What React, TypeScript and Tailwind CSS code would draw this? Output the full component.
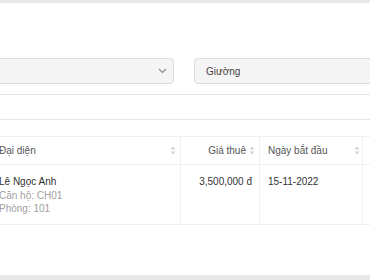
function SortIcon() {
  return (
    <svg width="6" height="9" viewBox="0 0 6 9" className="shrink-0">
      <path d="M3 0.5 L5.5 3.5 H0.5 Z" fill="#d2d2d2" />
      <path d="M3 8.5 L5.5 5.5 H0.5 Z" fill="#d2d2d2" />
    </svg>
  );
}

function Chevron() {
  return (
    <svg width="9" height="6" viewBox="0 0 9 6" fill="none">
      <path d="M1 1 L4.5 4.5 L8 1" stroke="#8c8c8c" strokeWidth="1.2" />
    </svg>
  );
}

export default function App() {
  return (
    <div
      className="w-[370px] h-[280px] bg-[#e8e8e8] pt-[3px] overflow-hidden"
      style={{ fontFamily: '"Liberation Sans", Arial, sans-serif' }}
    >
      <div className="h-[272px] bg-white overflow-hidden">
        {/* filters */}
        <div className="pt-[55px] pb-[10px] border-b border-[#e6e6e6]">
          <div className="flex gap-[20px] -ml-[26px]">
            <div className="w-[200px] h-[26px] shrink-0 rounded-[4px] border border-[#dcdcdc] bg-[#f5f5f5] flex items-center justify-end pr-[6px]">
              <Chevron />
            </div>
            <div className="w-[200px] h-[26px] shrink-0 rounded-[4px] border border-[#dcdcdc] bg-[#f5f5f5] flex items-center pl-[11px] text-[10px] text-[#444]">
              Giường
            </div>
          </div>
        </div>

        <div className="h-[25px] border-b border-[#e6e6e6]" />

        {/* table */}
        <div className="mt-[16px] -ml-[9px] border-t border-[#f0f0f0] text-[10px]">
          <div className="flex h-[28px] border-b border-[#f0f0f0] text-[#555]">
            <div className="w-[190px] shrink-0 flex items-center justify-between pl-[8px] pr-[4px] border-r border-[#f0f0f0]">
              <span>Đại diện</span>
              <SortIcon />
            </div>
            <div className="w-[79px] shrink-0 flex items-center justify-end gap-[3px] px-[4px] border-r border-[#f0f0f0]">
              <span>Giá thuê</span>
              <SortIcon />
            </div>
            <div className="w-[103px] shrink-0 flex items-center justify-between pl-[8px] pr-[2px] border-r border-[#f0f0f0]">
              <span>Ngày bắt đầu</span>
              <SortIcon />
            </div>
            <div className="flex-1" />
          </div>

          <div className="flex border-b border-[#f0f0f0] text-[#333] leading-[13.5px]">
            <div className="w-[190px] shrink-0 pt-[10px] pb-[8px] px-[8px] border-r border-[#f0f0f0]">
              <div>Lê Ngọc Anh</div>
              <div className="text-[#a0a0a0]">Căn hộ: CH01</div>
              <div className="text-[#a0a0a0]">Phòng: 101</div>
            </div>
            <div className="w-[79px] shrink-0 pt-[10px] px-[7px] text-right border-r border-[#f0f0f0]">
              3,500,000 đ
            </div>
            <div className="w-[103px] shrink-0 pt-[10px] px-[8px] border-r border-[#f0f0f0]">
              15-11-2022
            </div>
            <div className="flex-1" />
          </div>
        </div>
      </div>
    </div>
  );
}
